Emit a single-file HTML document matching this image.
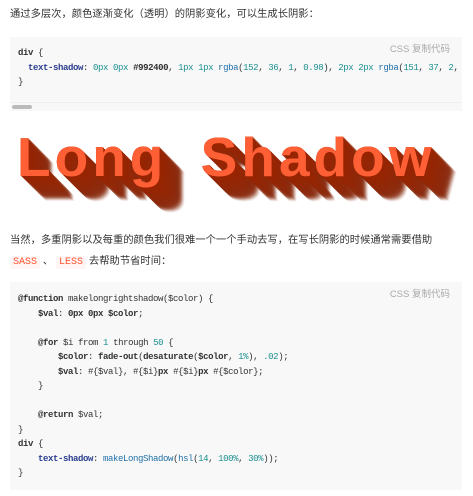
<!DOCTYPE html>
<html><head><meta charset="utf-8"><style>
*{margin:0;padding:0;box-sizing:border-box}
body{width:473px;height:496px;overflow:hidden;background:#fff;font-family:"Liberation Sans","Noto Sans CJK SC",sans-serif;color:#333;font-size:10.3px}
p{position:absolute;left:10px;line-height:21px;white-space:nowrap}
.code{position:absolute;left:10px;width:452px;background:#f8f8f8;font-family:"Liberation Mono",monospace;font-size:9px;letter-spacing:-0.4px;line-height:14.5px;color:#333;white-space:pre;overflow:hidden}
.lab{position:absolute;right:12px;top:6px;font-family:"Liberation Sans","Noto Sans CJK SC",sans-serif;font-size:9.5px;letter-spacing:0;color:#aaa}
.k{color:#333;font-weight:bold}
.p{color:#2a3d8f;font-weight:bold}
.n{color:#1a8f8f}
.f{color:#1f6fa8}
.ic{font-family:"Liberation Mono",monospace;color:#ff502c;background:#fff5f5;padding:1px 3px;font-size:10px;border-radius:2px}
.ls{position:absolute;left:17px;top:125px;font:bold 55px "Liberation Sans",sans-serif;letter-spacing:4px;word-spacing:14px;color:#ff5f35;white-space:nowrap;
text-shadow:0 0 #992400,1px 1px rgba(152,36,1,.98),2px 2px rgba(151,37,2,.96),3px 3px rgba(151,37,2,.94),4px 4px rgba(150,37,3,.92),5px 5px rgba(149,38,4,.9),6px 6px rgba(148,38,5,.88),7px 7px rgba(148,39,5,.86),8px 8px rgba(147,39,6,.84),9px 9px rgba(146,39,7,.82),10px 10px rgba(145,40,8,.8),11px 11px rgba(145,40,8,.78),12px 12px rgba(144,41,9,.76),13px 13px rgba(143,41,10,.74),14px 14px rgba(142,41,11,.72),15px 15px rgba(142,42,11,.7),16px 16px rgba(141,42,12,.68),17px 17px rgba(140,43,13,.66),18px 18px rgba(139,43,14,.64),19px 19px rgba(138,43,15,.62),20px 20px rgba(138,44,15,.6),21px 21px rgba(137,44,16,.5),22px 22px rgba(136,45,17,.4),23px 23px rgba(135,45,18,.3),24px 24px rgba(135,45,18,.2),25px 25px rgba(134,46,19,.1)}
</style></head><body>
<p style="top:4px">通过多层次，颜色逐渐变化（透明）的阴影变化，可以生成长阴影：</p>
<div class="code" style="top:37px;height:74px;padding:9px 0 0 8px"><span class="lab">CSS 复制代码</span><span class="k">div</span> {
  <span class="p">text-shadow</span>: <span class="n">0px 0px</span> <span class="k">#992400</span>, <span class="n">1px 1px</span> <span class="f">rgba</span>(<span class="n">152</span>, <span class="n">36</span>, <span class="n">1</span>, <span class="n">0.98</span>), <span class="n">2px 2px</span> <span class="f">rgba</span>(<span class="n">151</span>, <span class="n">37</span>, <span class="n">2</span>,
}<div style="position:absolute;left:2px;bottom:2px;width:20px;height:4px;border-radius:2px;background:#bbb"></div><div style="position:absolute;left:0;right:0;bottom:8px;height:1px;background:#eee"></div></div>
<div class="ls">Long Shadow</div>
<p style="top:230px">当然，多重阴影以及每重的颜色我们很难一个一个手动去写，在写长阴影的时候通常需要借助<br><span class="ic">SASS</span> 、 <span class="ic">LESS</span> 去帮助节省时间：</p>
<div class="code" style="top:282px;height:208px;padding:10px 0 0 8px"><span class="lab">CSS 复制代码</span><span class="k">@function</span> makelongrightshadow($color) {
    <span class="k">$val</span>: <span class="k">0px 0px $color</span>;

    <span class="k">@for</span> $i from <span class="n">1</span> through <span class="n">50</span> {
        <span class="k">$color</span>: <span class="k">fade-out</span>(<span class="k">desaturate</span>(<span class="k">$color</span>, <span class="n">1%</span>), <span class="n">.02</span>);
        <span class="k">$val</span>: #{$val}, #{$i}<span class="k">px</span> #{$i}<span class="k">px</span> #{$color};
    }

    <span class="k">@return</span> $val;
}
<span class="k">div</span> {
    <span class="p">text-shadow</span>: <span class="f">makeLongShadow</span>(<span class="f">hsl</span>(<span class="n">14</span>, <span class="n">100%</span>, <span class="n">30%</span>));
}</div>
</body></html>
